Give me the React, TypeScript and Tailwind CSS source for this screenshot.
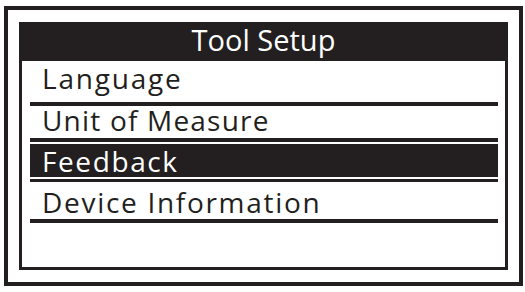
const items = [
  { label: "Language", row: "h-[45px] pt-[3px] border-b-4 tracking-[1.8px]" },
  { label: "Unit of Measure", row: "h-[36px] pt-0 border-b-4 tracking-[1.2px]" },
];

export default function App() {
  return (
    <div className="w-[525px] h-[292px] bg-white pt-[6px] pl-[4px] text-[#231f20] font-['Open_Sans',sans-serif]">
      {/* outer frame */}
      <div className="w-[519px] h-[280px] border-4 border-[#231f20] pt-[12px] pl-[11px]">
        {/* screen */}
        <div className="w-[489px] h-[248px] border-[3px] border-[#231f20] flex flex-col">
          <div className="h-[36px] bg-[#231f20] text-white text-center text-[29px] leading-[30px]">
            Tool Setup
          </div>
          <div className="pl-[8px] pr-[7px] flex flex-col text-[28px] leading-[28px] tracking-[1.6px]">
            {items.map((it) => (
              <div key={it.label} className={`${it.row} border-[#231f20] pl-[12px]`}>
                {it.label}
              </div>
            ))}
            {/* selected row */}
            <div className="mt-[2px] h-[33px] bg-[#231f20] text-white pl-[12px] pt-[3px]">
              Feedback
            </div>
            <div className="mt-[2px] h-[3px] bg-[#231f20]" />
            <div className="h-[41px] border-b-4 border-[#231f20] pl-[12px] pt-[6px] tracking-[1.7px]">
              Device Information
            </div>
          </div>
        </div>
      </div>
    </div>
  );
}
